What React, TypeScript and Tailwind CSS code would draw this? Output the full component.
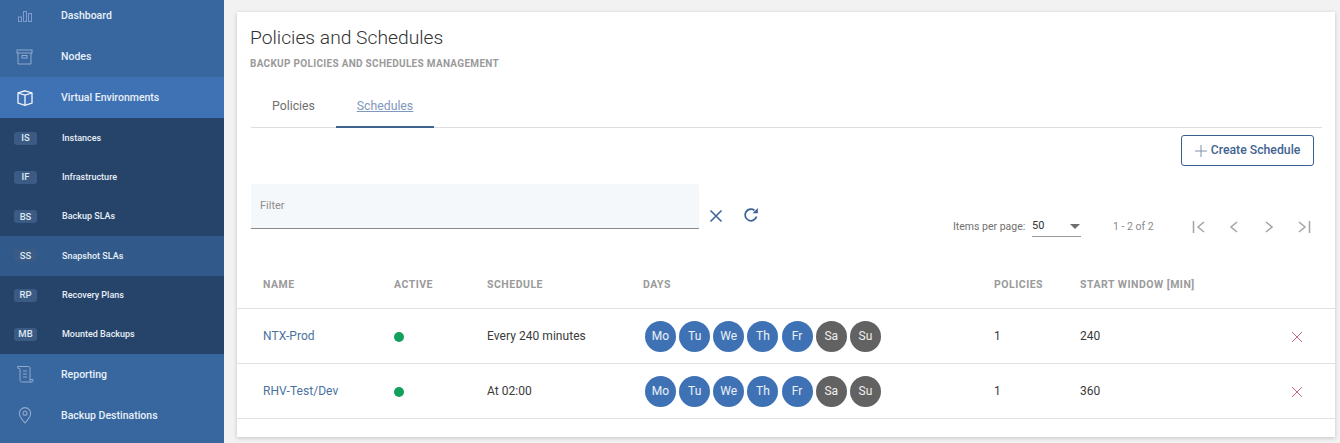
import React from 'react';

const subItems = [
  { code: 'IS', label: 'Instances' },
  { code: 'IF', label: 'Infrastructure' },
  { code: 'BS', label: 'Backup SLAs' },
  { code: 'SS', label: 'Snapshot SLAs', hover: true },
  { code: 'RP', label: 'Recovery Plans' },
  { code: 'MB', label: 'Mounted Backups' },
];

const schedules = [
  { name: 'NTX-Prod', schedule: 'Every 240 minutes', policies: '1', window: '240' },
  { name: 'RHV-Test/Dev', schedule: 'At 02:00', policies: '1', window: '360' },
];

const days = ['Mo', 'Tu', 'We', 'Th', 'Fr', 'Sa', 'Su'];

function NavItem({ icon, label, active }: { icon: React.ReactNode; label: string; active?: boolean }) {
  return (
    <div className={`h-[41px] flex items-center shrink-0 ${active ? 'bg-[#3f72b4]' : ''}`}>
      <div className="w-[61px] pl-[17px] flex items-center">{icon}</div>
      <span className="text-[10.5px] font-medium text-[#e8f0f8]">{label}</span>
    </div>
  );
}

function Sidebar() {
  return (
    <aside className="w-[224px] h-full shrink-0 bg-[#38679f] overflow-hidden flex flex-col">
      <div className="-mt-[5px]">
        <NavItem
          label="Dashboard"
          icon={
            <svg width="16" height="16" viewBox="0 0 16 16" fill="none" stroke="#7f9bd0" strokeWidth="1">
              <rect x="1.500" y="9" width="3" height="4.500" />
              <rect x="6.500" y="3.500" width="3" height="10" />
              <rect x="11.500" y="5.500" width="3" height="8" />
            </svg>
          }
        />
        <NavItem
          label="Nodes"
          icon={
            <svg width="16" height="16" viewBox="0 0 16 16" fill="none" stroke="#90a9cc" strokeWidth="1" className="overflow-visible">
              <rect x="0" y="1" width="15" height="3" />
              <path d="M1 4v11h13V4" />
              <rect x="5" y="6.5" width="5" height="2.5" />
            </svg>
          }
        />
        <NavItem
          active
          label="Virtual Environments"
          icon={
            <svg width="16" height="16" viewBox="0 0 16 16" fill="none" stroke="#f2f6fb" strokeWidth="1.300" className="overflow-visible">
              <path d="M8 .8 15 3v10l-7 2.400L1 13V3z" />
              <path d="M1 3l7 2 7-2M8 5v10.400" />
            </svg>
          }
        />
      </div>
      <div className="bg-[#264369] pt-[0.4px] flex flex-col">
        {subItems.map((item) => (
          <div key={item.code} className={`h-[39.3px] flex items-center ${item.hover ? 'bg-[#315a8a]' : ''}`}>
            <div className="w-[62px] pl-[14px]">
              <div className="w-[23px] h-[13px] rounded-[3px] bg-[#3b5b85] flex items-center justify-center text-[9.5px] font-medium text-[#dfe8f2]">
                {item.code}
              </div>
            </div>
            <span className="pt-[1px] text-[9px] font-medium text-[#e8f0f8]">{item.label}</span>
          </div>
        ))}
      </div>
      <NavItem
        label="Reporting"
        icon={
          <svg width="17" height="17" viewBox="0 0 17 17" fill="none" stroke="#90a9cc" strokeWidth="1" className="overflow-visible">
            <path d="M0.500 .500h11c1 0 1.500 .700 1.500 1.500v12.500c0 1 .700 1.500 1.500 1.500h-10c-1 0-1.500-.700-1.500-1.500V3.500C3 2 2 2.500 1 2.500z" />
            <path d="M6 5h4M6 8h4M6 11h4M13 13.500h3v1.500c0 .700-.500 1-1.500 1" />
          </svg>
        }
      />
      <NavItem
        label="Backup Destinations"
        icon={
          <svg width="16" height="17" viewBox="0 0 16 17" fill="none" stroke="#90a9cc" strokeWidth="1.100" className="overflow-visible">
            <path d="M8 16C5 12.500 2.300 10 2.300 6.300a5.700 5.700 0 0 1 11.400 0C13.700 10 11 12.500 8 16z" />
            <circle cx="8" cy="6.300" r="2" />
          </svg>
        }
      />
    </aside>
  );
}

function PagerIcon({ d }: { d: string }) {
  return (
    <svg width="16" height="16" viewBox="0 0 16 16" fill="none" stroke="#a3a3a3" strokeWidth="1.500">
      <path d={d} />
    </svg>
  );
}

function Toolbar() {
  return (
    <div className="pl-[14px] pr-[21px]">
      <div className="flex justify-end pt-[7px]">
        <button className="w-[133px] h-[31px] rounded-[3px] border border-[#38618f] flex items-center justify-center gap-[4px] text-[12.25px] font-medium text-[#3f6392]">
          <svg width="12" height="12" viewBox="0 0 12 12" stroke="#8092ab" strokeWidth="1">
            <path d="M6 0v12M0 6h12" />
          </svg>
          Create Schedule
        </button>
      </div>
      <div className="flex mt-[18px] h-[45px]">
        <div className="w-[448px] h-[45px] pt-[1px] bg-[#f5f8fb] border-b border-[#8b8b8b] rounded-t-[3px] flex items-center pl-[9px] text-[11px] text-[#8e8e8e]">
          Filter
        </div>
        <div className="flex items-end pb-[6px] pl-[10px] gap-[20px]">
          <svg width="14" height="14" viewBox="0 0 14 14" fill="none" stroke="#3f6597" strokeWidth="1.600">
            <path d="M1.500 1.500l11 11M12.500 1.500l-11 11" />
          </svg>
          <svg width="16" height="16" viewBox="0 0 16 16" fill="none" stroke="#3f6597" strokeWidth="1.800">
            <path d="M13.500 9.500A5.800 5.800 0 1 1 11.500 3.400" />
            <path d="M9.500 6.300h5.400V1z" fill="#3f6597" stroke="none" />
          </svg>
        </div>
        <div className="flex-1 flex items-end justify-end pr-[2px]">
          <div className="flex items-center h-[26px] -mb-[11px]">
            <span className="text-[10.5px] text-[#6f6f6f] w-[79px]">Items per page:</span>
            <div className="w-[49px] h-[19px] border-b border-[#9a9a9a] flex items-center justify-between pr-[1px] text-[11px] text-[#333]">
              50
              <span className="w-0 h-0 border-x-[5px] border-x-transparent border-t-[5px] border-t-[#6f6f6f]" />
            </div>
            <span className="text-[10.5px] text-[#8a8a8a] w-[78px] ml-[32px]">1 - 2 of 2</span>
            <div className="flex gap-[19px]">
              <PagerIcon d="M2.500 2v12M13 3 7 8l6 5" />
              <PagerIcon d="M11 3 5 8l6 5" />
              <PagerIcon d="M5 3l6 5-6 5" />
              <PagerIcon d="M3 3l6 5-6 5M13.500 2v12" />
            </div>
          </div>
        </div>
      </div>
    </div>
  );
}

function ScheduleTable() {
  return (
    <div className="mt-[38px]">
      <div className="h-[42px] pl-[26px] pb-[6px] flex items-center border-b border-[#e0e0e0] text-[10.5px] font-bold text-[#9a9a9a] tracking-[0.5px]">
        <div className="w-[131px]">NAME</div>
        <div className="w-[93px]">ACTIVE</div>
        <div className="w-[156px]">SCHEDULE</div>
        <div className="w-[351px]">DAYS</div>
        <div className="w-[86px]">POLICIES</div>
        <div>START WINDOW [MIN]</div>
      </div>
      {schedules.map((row) => (
        <div key={row.name} className="h-[55px] pl-[26px] flex items-center border-b border-[#e0e0e0] text-[12px] text-[#3a3a3a] tracking-[0.05px]">
          <div className="w-[131px] text-[#4a72a0]">{row.name}</div>
          <div className="w-[93px]">
            <div className="w-[10px] h-[10px] rounded-full bg-[#12a05c] translate-y-[1px]" />
          </div>
          <div className="w-[156px]">{row.schedule}</div>
          <div className="w-[351px] pl-[2px] flex gap-[3.17px]">
            {days.map((d, i) => (
              <div
                key={d}
                className={`w-[31px] h-[31px] rounded-full flex items-center justify-center text-[12px] text-white/90 ${i < 5 ? 'bg-[#3f72b4]' : 'bg-[#626262]'}`}
              >
                {d}
              </div>
            ))}
          </div>
          <div className="w-[86px]">{row.policies}</div>
          <div className="w-[211px]">{row.window}</div>
          <svg width="12" height="12" viewBox="0 0 12 12" stroke="#c4697e" strokeWidth="1" className="translate-y-[1px]">
            <path d="M1 1l10 10M11 1 1 11" />
          </svg>
        </div>
      ))}
    </div>
  );
}

export default function App() {
  return (
    <div className="w-[1340px] h-[443px] flex overflow-hidden bg-[#f2f2f2] font-['Roboto',sans-serif]">
      <Sidebar />
      <main className="flex-1 pl-[13px] pr-[5px] pt-[12px] pb-[6px]">
        <div className="h-full bg-white shadow-[0_1px_4px_rgba(0,0,0,0.2)]">
          <div className="px-[13px]">
            <h1 className="pt-[14px] text-[19.25px] leading-[24px] font-light text-[#333]">Policies and Schedules</h1>
            <p className="mt-[8px] text-[10px] leading-[12px] font-bold text-[#9a9a9a] tracking-[0.3px]">BACKUP POLICIES AND SCHEDULES MANAGEMENT</p>
            <div className="mt-[16px] h-[42px] ml-[1px] border-b border-[#dedede] flex text-[12.25px]">
              <div className="w-[85px] flex items-center justify-center text-[#6f6f6f]">Policies</div>
              <div className="w-[98px] h-[42px] border-b-2 border-[#3f638f] flex items-center justify-center text-[#7f98bd] underline">Schedules</div>
            </div>
          </div>
          <Toolbar />
          <ScheduleTable />
        </div>
      </main>
    </div>
  );
}
